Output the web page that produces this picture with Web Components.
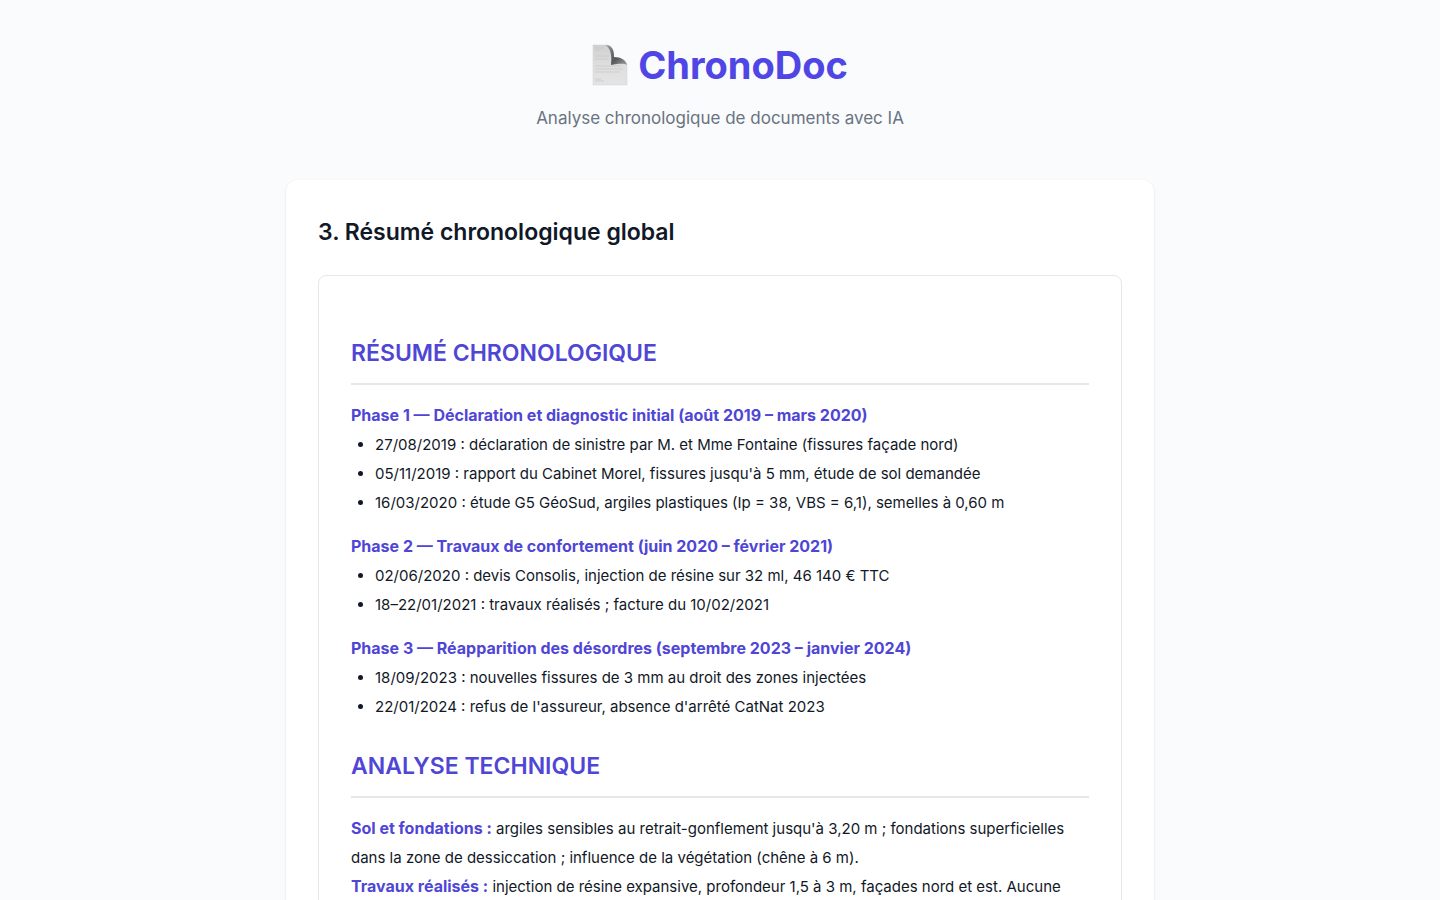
<!DOCTYPE html>
<html lang="fr">
<head>
<meta charset="utf-8">
<meta name="viewport" content="width=device-width, initial-scale=1">
<title>ChronoDoc</title>
<style>
  :root {
    --accent: #4f46e5;
    --accent-deep: #4f46d6;
    --line: #e5e7eb;
    --muted: #6b7280;
  }
  body {
    margin: 0;
    background: #f9fbfd;
    color: #111827;
    font: 15px/29px Inter, "Liberation Sans", sans-serif;
  }
</style>
</head>
<body>
<chrono-app>
  <app-header slot="header" name="ChronoDoc">Analyse chronologique de documents avec IA</app-header>
  <step-card heading="3. Résumé chronologique global">
    <report-section heading="RÉSUMÉ CHRONOLOGIQUE">
      <phase-block heading="Phase 1 — Déclaration et diagnostic initial (août 2019 – mars 2020)"
        items="27/08/2019 : déclaration de sinistre par M. et Mme Fontaine (fissures façade nord)|05/11/2019 : rapport du Cabinet Morel, fissures jusqu'à 5 mm, étude de sol demandée|16/03/2020 : étude G5 GéoSud, argiles plastiques (Ip = 38, VBS = 6,1), semelles à 0,60 m"></phase-block>
      <phase-block heading="Phase 2 — Travaux de confortement (juin 2020 – février 2021)"
        items="02/06/2020 : devis Consolis, injection de résine sur 32 ml, 46 140 € TTC|18–22/01/2021 : travaux réalisés ; facture du 10/02/2021"></phase-block>
      <phase-block heading="Phase 3 — Réapparition des désordres (septembre 2023 – janvier 2024)"
        items="18/09/2023 : nouvelles fissures de 3 mm au droit des zones injectées|22/01/2024 : refus de l'assureur, absence d'arrêté CatNat 2023"></phase-block>
    </report-section>
    <report-section heading="ANALYSE TECHNIQUE">
      <labelled-note label="Sol et fondations :">argiles sensibles au retrait-gonflement jusqu'à 3,20 m ; fondations superficielles dans la zone de dessiccation ; influence de la végétation (chêne à 6 m).</labelled-note>
      <labelled-note label="Travaux réalisés :">injection de résine expansive, profondeur 1,5 à 3 m, façades nord et est. Aucune</labelled-note>
    </report-section>
  </step-card>
</chrono-app>

<template id="chrono-app">
  <style>
    :host { display: block; max-width: 868px; margin: 0 auto; padding: 32px 16px; }
    main { margin-top: 48px; }
  </style>
  <slot name="header"></slot>
  <main><slot></slot></main>
</template>

<template id="app-header">
  <style>
    :host { display: block; text-align: center; }
    h1 { display: flex; justify-content: center; align-items: center; gap: 10px; margin: 0; color: var(--accent); font-size: 38px; line-height: 66px; font-weight: 700; }
    svg { width: 36px; height: 42px; }
    p { margin: 6px 0 0; color: var(--muted); font-size: 17px; line-height: 28px; }
  </style>
  <header>
    <h1>
      <svg viewBox="0 0 36 42" aria-hidden="true">
        <defs>
          <linearGradient id="sheet" x1="0" y1="0" x2="0" y2="1">
            <stop offset="0" stop-color="#d0d0d0"/><stop offset=".5" stop-color="#dedede"/><stop offset="1" stop-color="#e4e4e4"/>
          </linearGradient>
          <linearGradient id="curl" x1="0" y1="0" x2="1" y2="1">
            <stop offset="0" stop-color="#a8a8a8"/><stop offset=".35" stop-color="#6c6c6c"/><stop offset=".6" stop-color="#585858"/><stop offset="1" stop-color="#a0a0a0"/>
          </linearGradient>
        </defs>
        <path d="M1 1H15C20 2 22 6 22 14C28 14 34 16 35 21V41H1Z" fill="url(#sheet)" stroke="#d0d0d0" stroke-width=".5"/>
        <path d="M13 1C19 1 22 4 22 13C29 13 34 16 35 21C31 19 26 20 19 21C20 12 19 4 13 1Z" fill="url(#curl)"/>
        <path d="M3 4H12M3 6H8M3 12H17M3 15H16M3 22H29M3 25H31M3 28H28M3 35H9M3 37H12" stroke="#c6c6c6" stroke-width=".7"/>
      </svg>
      <span id="name"></span>
    </h1>
    <p><slot></slot></p>
  </header>
</template>

<template id="step-card">
  <style>
    :host { display: block; padding: 32px; background: #fff; border-radius: 12px; box-shadow: 0 1px 3px rgb(0 0 0 / 10%); }
    h2 { margin: 0 0 22px; font-size: 23px; line-height: 41px; font-weight: 600; }
    article { padding: 32px; border: 1px solid var(--line); border-radius: 8px; }
  </style>
  <section aria-labelledby="title">
    <h2 id="title"></h2>
    <article><slot></slot></article>
  </section>
</template>

<template id="report-section">
  <style>
    :host { display: block; padding-top: 24px; }
    h3 { margin: 0 0 16px; padding-bottom: 8px; border-bottom: 2px solid var(--line); color: var(--accent-deep); font-size: 23px; line-height: 43px; font-weight: 600; }
  </style>
  <section><h3 id="title"></h3><slot></slot></section>
</template>

<template id="phase-block">
  <style>
    :host { display: block; margin-bottom: 15px; }
    :host(:last-child) { margin-bottom: 0; }
    h4 { margin: 0; color: var(--accent-deep); font-size: 16px; font-weight: 700; }
    ul { margin: 0; padding-left: 24px; }
  </style>
  <h4></h4><ul></ul>
</template>

<template id="labelled-note">
  <style>
    :host { display: block; }
    p { margin: 0; }
    strong { color: var(--accent-deep); font-size: 16px; line-height: 1; font-weight: 700; }
  </style>
  <p><strong></strong> <slot></slot></p>
</template>

<script>
  class TemplateElement extends HTMLElement {
    constructor() {
      super();
      const template = document.getElementById(this.localName);
      this.attachShadow({ mode: "open" }).append(template.content.cloneNode(true));
    }
    fill(selector, attribute) {
      this.shadowRoot.querySelector(selector).textContent = this.getAttribute(attribute);
    }
  }
  class ChronoApp extends TemplateElement {}
  class AppHeader extends TemplateElement {
    connectedCallback() { this.fill("#name", "name"); }
  }
  class StepCard extends TemplateElement {
    connectedCallback() { this.fill("#title", "heading"); }
  }
  class ReportSection extends TemplateElement {
    connectedCallback() { this.fill("#title", "heading"); }
  }
  class PhaseBlock extends TemplateElement {
    connectedCallback() {
      this.fill("h4", "heading");
      this.shadowRoot.querySelector("ul").replaceChildren(
        ...this.getAttribute("items").split("|").map((text) => {
          const li = document.createElement("li");
          li.textContent = text;
          return li;
        })
      );
    }
  }
  class LabelledNote extends TemplateElement {
    connectedCallback() { this.fill("strong", "label"); }
  }
  customElements.define("chrono-app", ChronoApp);
  customElements.define("app-header", AppHeader);
  customElements.define("step-card", StepCard);
  customElements.define("report-section", ReportSection);
  customElements.define("phase-block", PhaseBlock);
  customElements.define("labelled-note", LabelledNote);
</script>
</body>
</html>
